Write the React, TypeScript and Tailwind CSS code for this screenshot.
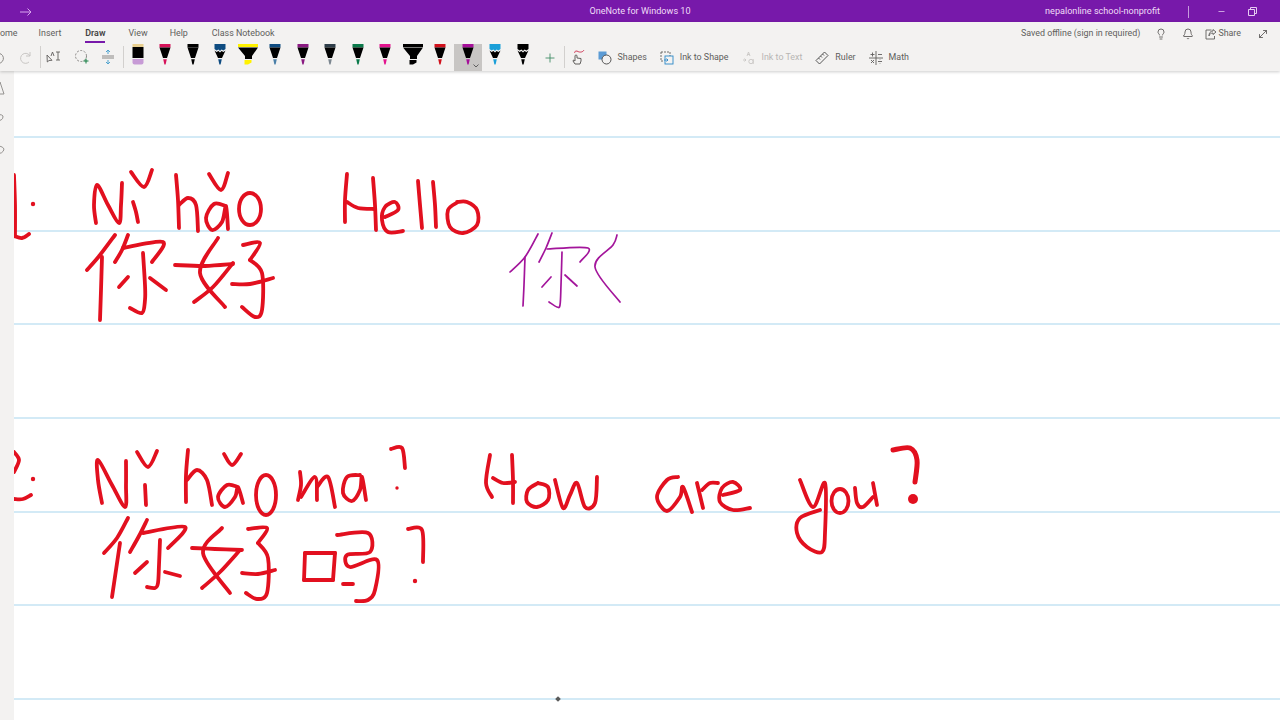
import { Bell, Lightbulb, Minus, MoveDiagonal, Plus } from 'lucide-react'

const font = { fontFamily: 'Roboto, "Noto Sans", sans-serif' }

// catmull-rom through the points, so ink strokes stay round
function inkPath(points: string) {
  const p = points.trim().split(/\s+/).map((s) => s.split(',').map(Number))
  let d = `M${p[0][0]} ${p[0][1]}`
  for (let i = 0; i < p.length - 1; i++) {
    const a = p[i - 1] || p[i]
    const b = p[i]
    const c = p[i + 1]
    const e = p[i + 2] || c
    const x1 = b[0] + (c[0] - a[0]) / 6
    const y1 = b[1] + (c[1] - a[1]) / 6
    const x2 = c[0] - (e[0] - b[0]) / 6
    const y2 = c[1] - (e[1] - b[1]) / 6
    d += `C${x1} ${y1} ${x2} ${y2} ${c[0]} ${c[1]}`
  }
  return d
}

const redInk = [
  // row 1, left
  '14,175 15,205 15,235', '14,236 22,238 29,234',
  // Ni hao
  '96,223 94,205 97,185 108,205 119,223 121,205 122,183', '133,202 136,212 138,222', '131,172 144,187 152,170',
  '176,175 178,200 179,228', '179,205 188,198 196,205 198,231',
  '226,206 214,204 206,218 212,230 222,222 226,206 228,229', '209,174 221,190 228,173',
  // nihao hanzi
  '115,235 100,255 87,270', '102,257 101,290 100,320', '128,235 122,250 115,262',
  '123,248 163,242 152,262', '143,253 145,285 145,300 142,313 130,308',
  '128,277 119,287', '150,278 166,290',
  '218,238 200,273 225,307', '233,263 213,287 194,302', '175,265 205,266 233,264',
  '243,245 260,243 250,260', '250,260 262,273 262,310 255,317 242,307', '232,284 250,284 273,278',
  // Hello
  '347,174 345,200 345,222', '373,178 375,205 376,230', '347,202 358,208 375,209',
  '385,217 398,210 395,202 385,207 382,220 388,232 403,231',
  '418,181 420,205 422,228', '433,182 435,205 436,227',
  '458,202 448,210 450,227 463,233 477,225 477,210 467,202 457,202',
  // row 2, left
  '14,452 19,460 14,472', '14,499 23,499 31,495',
  // Ni hao ma
  '102,503 98,480 98,460 112,485 125,507 126,485 126,461', '145,485 146,505', '137,452 148,467 157,451',
  '188,450 186,475 186,502', '187,480 197,470 207,480 212,505',
  '238,487 227,485 218,497 225,507 235,497 238,487 243,503', '224,454 232,465 241,454',
  '300,472 301,485 298,500', '301,497 315,477 317,500', '317,487 328,477 335,507',
  '360,475 347,477 343,493 352,501 360,490 362,477 366,500',
  '391,449 402,448 405,468',
  // ni hao ma hanzi
  '128,518 117,538 104,553', '120,543 116,570 112,597', '147,520 139,536 130,552',
  '143,533 185,527 168,548', '160,540 159,565 158,583 155,588 147,587',
  '147,562 135,573', '165,572 180,576',
  '222,528 203,553 230,593', '240,550 220,572 202,588', '192,548 215,549 242,550',
  '248,529 267,528 258,543', '258,543 268,558 267,593 257,599 246,593', '242,573 258,574 275,570',
  '305,553 304,580', '304,580 333,580', '333,580 335,553', '335,553 305,553',
  '337,535 368,533 370,552 347,555 350,567 377,560 375,590 368,600 356,601', '343,584 353,584',
  '408,529 422,530 423,562',
  // How are you
  '490,455 486,483 492,497', '512,455 513,480 513,503', '493,478 503,483 515,482',
  '538,483 528,490 527,502 537,507 548,500 548,487 538,483',
  '555,480 563,508 570,495 577,483 585,507 595,503 597,477',
  '678,477 667,480 657,497 667,511 680,497 683,487 692,512',
  '697,483 703,508', '702,490 710,483 718,483',
  '723,495 740,490 733,482 722,488 720,502 733,510 750,508',
  '800,480 813,507 825,483 825,533 822,552 807,547 797,533 800,518 820,510',
  '855,488 857,503 863,507 873,497', '873,483 877,505',
]

const purpleInk = [
  '538,234 525,257 510,272', '525,257 524,285 523,306', '552,233 546,248 539,262',
  '547,249 588,248 580,262', '562,252 561,285 560,305 557,307 549,302',
  '551,277 542,287', '565,275 577,286', '617,235 613,245 595,267 620,302',
]

function Ink() {
  return (
    <svg viewBox="14 71 1266 649" className="absolute inset-0 w-[1266px] h-[649px]" fill="none" strokeLinecap="round" strokeLinejoin="round">
      <g stroke="#e2101f" strokeWidth="3.8">
        {redInk.map((s, i) => (
          <path key={i} d={inkPath(s)} />
        ))}
        <ellipse cx="250" cy="209" rx="11" ry="16" />
        <ellipse cx="266" cy="495" rx="10" ry="20" />
        <ellipse cx="840" cy="501" rx="8.5" ry="12" />
        <path d={inkPath('893,450 910,448 917,460 915,482')} strokeWidth="5" />
      </g>
      <g fill="#e2101f">
        <circle cx="33" cy="204" r="2.2" />
        <circle cx="33" cy="479" r="2.2" />
        <circle cx="397" cy="488" r="1.7" />
        <circle cx="415" cy="581" r="2.2" />
        <circle cx="913" cy="499" r="5" />
      </g>
      <g stroke="#a3159b" strokeWidth="1.7">
        {purpleInk.map((s, i) => (
          <path key={i} d={inkPath(s)} />
        ))}
      </g>
    </svg>
  )
}

type PenProps = { color: string; kind?: 'pen' | 'galaxy' | 'marker' | 'eraser'; tip?: string }

function Pen({ color, kind = 'pen', tip }: PenProps) {
  if (kind === 'eraser') {
    return (
      <svg width="14" height="22" viewBox="0 0 14 22">
        <rect x="1.5" y="0" width="11" height="3" fill={color} />
        <rect x="1.5" y="3" width="11" height="11" fill="#000" />
        <path d="M1.500 15h11v3.500a2 2 0 0 1-2 2h-7a2 2 0 0 1-2-2z" fill={tip} />
      </svg>
    )
  }
  if (kind === 'marker') {
    return (
      <svg width="22" height="22" viewBox="0 0 22 22">
        <rect x="1" y="0" width="20" height="3" fill={color} />
        <path d="M1 3.500h20L15 12v3H8v-3z" fill="#000" />
        <path d="M7.500 16h7v2.500l-3.500 2H7.500z" fill={tip || color} />
      </svg>
    )
  }
  return (
    <svg width="14" height="22" viewBox="0 0 14 22">
      {kind === 'galaxy' ? (
        <>
          <path d="M1.500 0h11v5l-2 1.500-2-1-1.500 1.500-1.500-1.500-2 1-2-1.500z" fill={color} />
          <path d="M1.500 6.500l2 1.500 2-1 1.500 1.500 1.500-1.500 2 1 2-1.500L9 14H5z" fill="#000" />
        </>
      ) : (
        <>
          <rect x="1.500" y="0" width="11" height="3.500" fill={color} />
          <path d="M1.500 3.500h11L9 14H5z" fill="#000" />
        </>
      )}
      <path d="M5.200 15.200h3.600L7.600 20.500H6.400z" fill={tip || color} />
    </svg>
  )
}

const pens: (PenProps & { selected?: boolean })[] = [
  { color: '#e8cf8f', kind: 'eraser', tip: '#c79bd6' },
  { color: '#d6135a' },
  { color: '#000', tip: '#000' },
  { color: '#0f4c81', kind: 'galaxy' },
  { color: '#fff200', kind: 'marker' },
  { color: '#0f4c81', tip: '#4a7fa8' },
  { color: '#8a1a82' },
  { color: '#2f3e4a', tip: '#7c8790' },
  { color: '#0b7a4b' },
  { color: '#e3148f' },
  { color: '#000', kind: 'marker' },
  { color: '#d1121d' },
  { color: '#a6109a', selected: true },
  { color: '#1a9fd8', kind: 'galaxy' },
  { color: '#000', kind: 'galaxy' },
]

function Sep() {
  return <div className="w-px h-[22px] bg-[#d2d0ce] self-center" />
}

function Tool({ icon, label, muted, className }: { icon: React.ReactNode; label: string; muted?: boolean; className?: string }) {
  return (
    <div className={`flex items-center ${className || ''}`}>
      <span className="w-[14px] h-[14px] flex items-center justify-center mr-[6px]">{icon}</span>
      <span className={muted ? 'text-[#b8b6b4]' : 'text-[#605e5c]'}>{label}</span>
    </div>
  )
}

export default function App() {
  return (
    <div className="w-[1280px] h-[720px] overflow-hidden flex flex-col bg-white" style={font}>
      {/* title bar */}
      <div className="h-[22px] shrink-0 pt-[1px] bg-[#7719aa] text-[#f0dcf7] text-[9.100px] flex items-center relative">
        <svg width="14" height="10" viewBox="0 0 14 10" className="ml-[19px]" fill="none" stroke="#d9a6ee" strokeWidth="1">
          <path d="M1 5h11M8.500 1.500 12 5 8.500 8.500" />
        </svg>
        <span className="absolute left-0 right-0 text-center">OneNote for Windows 10</span>
        <span className="ml-auto mr-[28px]">nepalonline school-nonprofit</span>
        <div className="w-px h-[12px] bg-[#c79bdd]" />
        <Minus size={9} className="ml-[28px] text-[#e7cdf2]" />
        <svg width="9" height="9" viewBox="0 0 9 9" className="ml-[22px] mr-[23px]" fill="none" stroke="#e7cdf2" strokeWidth="1">
          <path d="M2.500 2V.5h6v6H7M.5 2.500h6v6h-6z" />
        </svg>
      </div>

      {/* ribbon */}
      <div className="h-[49px] shrink-0 bg-[#f3f2f1] shadow-[0_1px_3px_rgba(0,0,0,0.2)] z-10 text-[8.900px]">
        <div className="h-[22px] pt-[1px] flex items-center text-[#605e5c] relative">
          <span>ome</span>
          <span className="ml-[21px]">Insert</span>
          <span className="ml-[24px] relative font-semibold text-[#444]">
            Draw
            <span className="absolute left-0 right-0 top-[14px] h-[2px] bg-[#7719aa]" />
          </span>
          <span className="ml-[23px]">View</span>
          <span className="ml-[22px]">Help</span>
          <span className="ml-[24px]">Class Notebook</span>
          <span className="ml-auto">Saved offline (sign in required)</span>
          <Lightbulb size={12} strokeWidth={1.8} className="ml-[15px] text-[#605e5c]" />
          <Bell size={12} strokeWidth={1.8} className="ml-[15px] text-[#605e5c]" />
          <svg width="12" height="12" viewBox="0 0 12 12" className="ml-[11px] mr-[1px]" fill="none" stroke="#605e5c" strokeWidth="0.9">
            <path d="M8 1.500l3 2.500-3 2.500V5C6 5 4.500 6 4 8c-.2-3 1.500-5 4-5zM6.500 2H1v9h8.500V8" />
          </svg>
          <span className="mr-[16px]">Share</span>
          <MoveDiagonal size={12} strokeWidth={1.8} className="mr-[11px] text-[#605e5c]" />
        </div>
        <div className="h-[27px] flex items-start">
          {/* undo, redo */}
          <svg width="14" height="14" viewBox="0 0 14 14" className="ml-[-9px] mt-[6px]" fill="none" stroke="#8a8886" strokeWidth="1">
            <path d="M3 2v4h4M3 6a5 5 0 1 1 1 6" />
          </svg>
          <svg width="14" height="14" viewBox="0 0 14 14" className="ml-[14px] mt-[6px]" fill="none" stroke="#c8c6c4" strokeWidth="1">
            <path d="M11 2v4H7M11 6a5 5 0 1 0-1 6" />
          </svg>
          <div className="ml-[7px] mt-[2px]">
            <Sep />
          </div>
          {/* type select */}
          <svg width="16" height="14" viewBox="0 0 16 14" className="ml-[5px] mt-[6px]" fill="none" stroke="#605e5c" strokeWidth="0.9">
            <path d="M1 5l.3 7 1.700-1.500 3-.2zM10 2h4M12 2v8M10 10h4M5 6l1.500-4L8 6" />
          </svg>
          {/* lasso */}
          <svg width="16" height="16" viewBox="0 0 16 16" className="ml-[12px] mt-[5px]" fill="none">
            <circle cx="7" cy="7" r="5.500" stroke="#8a8886" strokeWidth="1" strokeDasharray="2 1.500" />
            <path d="M12 9.500v5M9.500 12h5" stroke="#107c41" strokeWidth="1" />
          </svg>
          {/* insert space */}
          <svg width="14" height="16" viewBox="0 0 14 16" className="ml-[11px] mt-[5px]" fill="none" strokeWidth="1">
            <path d="M1 7h12M1 9h12" stroke="#8a8886" />
            <path d="M7 1v4M5 3l2-2 2 2M7 15v-4M5 13l2 2 2-2" stroke="#4fa3cf" />
          </svg>
          <div className="ml-[8px] mt-[2px]">
            <Sep />
          </div>
          {/* pens */}
          <div className="flex items-start">
            {pens.map((pen, i) => (
              <div key={i} className={`w-[27.500px] h-[27px] flex justify-center relative ${pen.selected ? 'bg-[#c8c6c4]' : ''}`}>
                <Pen {...pen} />
                {pen.selected && (
                  <svg width="6" height="4" viewBox="0 0 6 4" className="absolute right-[3px] bottom-[3px]" fill="none" stroke="#444" strokeWidth="0.8">
                    <path d="M.5.5 3 3 5.500.5" />
                  </svg>
                )}
              </div>
            ))}
          </div>
          <Plus size={14} strokeWidth={1.5} className="ml-[6px] mt-[7px] text-[#3b8a63]" />
          <div className="ml-[7px] mt-[2px]">
            <Sep />
          </div>
          <svg width="14" height="16" viewBox="0 0 14 16" className="ml-[6px] mt-[5px]" fill="none" strokeWidth="1">
            <path d="M6 2c3 2 6 1 7-1M6 2c-2 0-3 1-2 2" stroke="#d13c5a" />
            <path d="M4 7v5L2.500 11 2 12l2 3h5l1-3V9.500L6 9V7a1 1 0 0 0-2 0z" stroke="#605e5c" />
          </svg>
          <div className="flex items-center h-[27px]">
            <Tool
              className="ml-[13px]"
              label="Shapes"
              icon={
                <svg width="14" height="14" viewBox="0 0 14 14">
                  <rect x="0.500" y="0.500" width="8" height="8" fill="#5b9bd5" />
                  <circle cx="8.500" cy="8.500" r="4.500" fill="#f3f2f1" stroke="#444" strokeWidth="0.9" />
                </svg>
              }
            />
            <Tool
              className="ml-[13px]"
              label="Ink to Shape"
              icon={
                <svg width="14" height="14" viewBox="0 0 14 14" fill="none" strokeWidth="0.9">
                  <path d="M1 1h9v4M1 1v9h3" stroke="#605e5c" strokeDasharray="2 1" />
                  <rect x="5" y="5" width="8" height="8" stroke="#2b88c8" />
                  <path d="M4 9h4M6.500 7.500 8 9l-1.500 1.500" stroke="#2b88c8" />
                </svg>
              }
            />
            <Tool
              className="ml-[13px]"
              muted
              label="Ink to Text"
              icon={
                <svg width="14" height="14" viewBox="0 0 14 14" fill="none" stroke="#c8c6c4" strokeWidth="0.9">
                  <path d="M5 5l1.500-4L8 5M5.500 3.500h2M1 9h3M2.500 7.500 4 9l-1.500 1.500" />
                  <circle cx="9" cy="10.500" r="2.200" />
                  <path d="M11.200 8v5" />
                </svg>
              }
            />
            <Tool
              className="ml-[13px]"
              label="Ruler"
              icon={
                <svg width="14" height="14" viewBox="0 0 14 14" fill="none" stroke="#444" strokeWidth="0.9">
                  <path d="M1 9.500 9.500 1l3.500 3.500L4.500 13zM7.500 3l1.500 1.500M5.500 5l1.500 1.500M3.500 7 5 8.500" />
                </svg>
              }
            />
            <Tool
              className="ml-[13px]"
              label="Math"
              icon={
                <svg width="14" height="14" viewBox="0 0 14 14" fill="none" stroke="#605e5c" strokeWidth="0.9">
                  <path d="M7 0v14M0 7h14M1.500 3.500h4M3.500 1.500v4M9 3.500h4M2 9l3 3M5 9l-3 3M9 10.500h4M11 8.500v.5M11 12v.5" />
                </svg>
              }
            />
          </div>
        </div>
      </div>

      {/* page */}
      <div className="flex-1 flex min-h-0">
        <div className="w-[14px] shrink-0 bg-[#f3f2f1] overflow-hidden relative">
          <svg width="14" height="90" viewBox="0 0 14 90" className="mt-[10px]" fill="none" stroke="#8a8886" strokeWidth="0.9">
            <path d="M-4 13 0 1l4 12zM-3 35a4 4 0 0 1 6 0 4 4 0 0 1-6 4M-3 66a5 5 0 0 1 7 2 5 5 0 0 1-7 4" />
          </svg>
        </div>
        <div className="flex-1 relative overflow-hidden">
          <div className="h-[65px]" />
          {[0, 1, 2, 3, 4, 5, 6].map((i) => (
            <div key={i} className={`${i === 0 ? 'h-[2px]' : 'h-[93.670px]'} border-b-2 border-[#d3eaf6]`} />
          ))}
          <Ink />
          <div className="absolute left-[542px] top-[626px] w-[4px] h-[4px] rotate-45 bg-[#5a5a5a]" />
        </div>
      </div>
    </div>
  )
}
